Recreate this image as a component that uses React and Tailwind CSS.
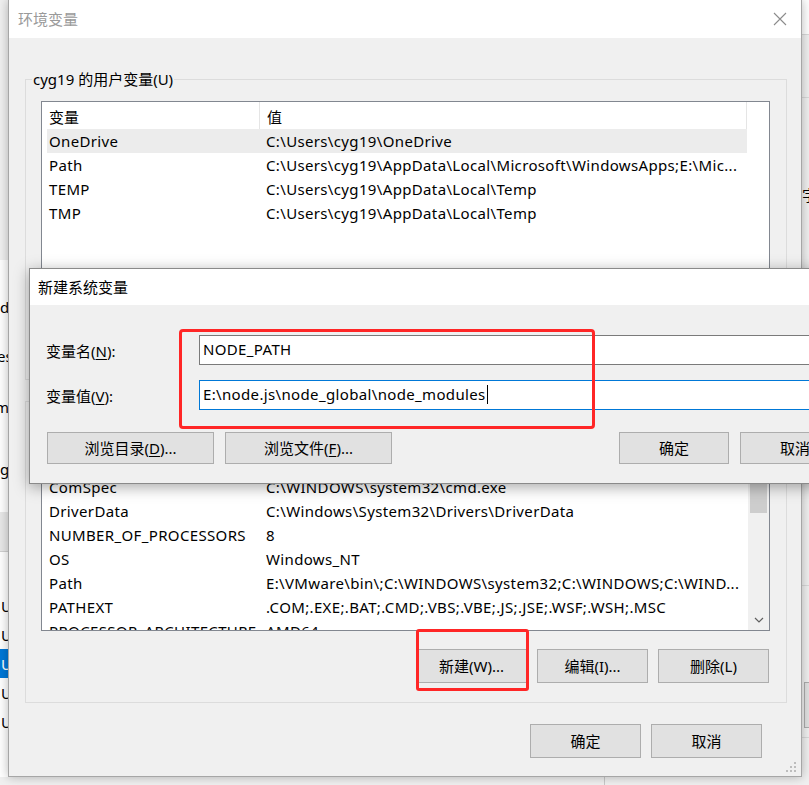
import React from 'react';

const userVars = [
  ['OneDrive', 'C:\\Users\\cyg19\\OneDrive'],
  ['Path', 'C:\\Users\\cyg19\\AppData\\Local\\Microsoft\\WindowsApps;E:\\Mic...'],
  ['TEMP', 'C:\\Users\\cyg19\\AppData\\Local\\Temp'],
  ['TMP', 'C:\\Users\\cyg19\\AppData\\Local\\Temp'],
];

const systemVars = [
  ['asl.log', 'Destination=file'],
  ['ComSpec', 'C:\\WINDOWS\\system32\\cmd.exe'],
  ['DriverData', 'C:\\Windows\\System32\\Drivers\\DriverData'],
  ['NUMBER_OF_PROCESSORS', '8'],
  ['OS', 'Windows_NT'],
  ['Path', 'E:\\VMware\\bin\\;C:\\WINDOWS\\system32;C:\\WINDOWS;C:\\WIND...'],
  ['PATHEXT', '.COM;.EXE;.BAT;.CMD;.VBS;.VBE;.JS;.JSE;.WSF;.WSH;.MSC'],
  ['PROCESSOR_ARCHITECTURE', 'AMD64'],
];

function Btn({ className = '', children }) {
  return (
    <div className={`flex shrink-0 items-center justify-center border border-[#adadad] bg-[#e1e1e1] leading-[20px] ${className}`}>
      {children}
    </div>
  );
}

function Key({ children }) {
  return <span className="underline underline-offset-2">{children}</span>;
}

function ListHeader() {
  return (
    <div className="flex h-[27px] w-[705px] shrink-0 bg-white leading-[20px]">
      <div className="flex w-[218px] items-center border-r border-[#e5e5e5] pl-[7px] pt-[2px]">变量</div>
      <div className="flex flex-1 items-center border-r border-[#e5e5e5] pl-[7px] pt-[2px]">值</div>
    </div>
  );
}

function Row({ name, value, active }) {
  return (
    <div className={`ml-[5px] flex h-[24px] w-[700px] shrink-0 items-center whitespace-nowrap leading-[20px] tracking-[0.35px] ${active ? 'bg-[#ececec]' : ''}`}>
      <div className="w-[212px] shrink-0 overflow-hidden pl-[2px]">{name}</div>
      <div className="flex-1 overflow-hidden pl-[7px]">{value}</div>
    </div>
  );
}

function Group({ label, className = '', children }) {
  return (
    <fieldset className={`ml-[16px] w-[762px] shrink-0 border border-[#dcdcdc] ${className}`}>
      <legend className="ml-[6px] px-[1px] leading-[20px]">{label}</legend>
      <div className="pl-[15px] pt-[12px]">{children}</div>
    </fieldset>
  );
}

function EnvDialog() {
  return (
    <div className="absolute left-[8px] top-0 flex h-[777px] w-[794px] flex-col border border-t-0 border-[#a6a6a6] bg-[#f0f0f0] shadow-[0_0_10px_rgba(0,0,0,0.28)]">
      <div className="flex h-[38px] shrink-0 items-center justify-between bg-white pl-[9px] pr-[14px] text-[#9a9a9a]">
        <span className="leading-[20px]">环境变量</span>
        <svg width="14" height="14" viewBox="0 0 14 14">
          <path d="M1 1L13 13M13 1L1 13" stroke="#8c8c8c" strokeWidth="1.1" fill="none" />
        </svg>
      </div>

      <Group label="cyg19 的用户变量(U)" className="mt-[31px] h-[311px]">
        <div className="flex h-[200px] w-[729px] flex-col overflow-hidden border border-[#828790] bg-white">
          <ListHeader />
          {userVars.map(([n, v], i) => (
            <Row key={n} name={n} value={v} active={i === 0} />
          ))}
        </div>
        <div className="mt-[18px] flex w-[729px] justify-end gap-[10px] pr-[1px]">
          <Btn className="h-[34px] w-[111px]">新建(N)...</Btn>
          <Btn className="h-[34px] w-[111px]">编辑(E)...</Btn>
          <Btn className="h-[34px] w-[111px]">删除(D)</Btn>
        </div>
      </Group>

      <Group label="系统变量(S)" className="mt-[11px] h-[312px]">
        <div className="flex h-[208px] w-[729px] overflow-hidden border border-[#828790] bg-white">
          <div className="flex w-[706px] flex-col overflow-hidden">
            <ListHeader />
            {systemVars.map(([n, v]) => (
              <Row key={n} name={n} value={v} />
            ))}
          </div>
          <div className="flex w-[21px] flex-col bg-[#f0f0f0]">
            <div className="h-[17px] shrink-0" />
            <div className="mx-[2px] h-[72px] shrink-0 bg-[#cdcdcd]" />
            <div className="flex-1" />
            <div className="flex h-[20px] shrink-0 items-center justify-center">
              <svg width="10" height="6" viewBox="0 0 10 6">
                <path d="M1 1L5 5L9 1" stroke="#606060" strokeWidth="1.2" fill="none" />
              </svg>
            </div>
          </div>
        </div>
        <div className="mt-[18px] flex w-[729px] justify-end gap-[10px] pr-[1px]">
          <Btn className="h-[34px] w-[111px]">新建(W)...</Btn>
          <Btn className="h-[34px] w-[111px]">编辑(I)...</Btn>
          <Btn className="h-[34px] w-[111px]">删除(L)</Btn>
        </div>
      </Group>

      <div className="mt-[21px] flex justify-end gap-[10px] pr-[39px]">
        <Btn className="h-[34px] w-[111px]">确定</Btn>
        <Btn className="h-[34px] w-[111px]">取消</Btn>
      </div>

      <svg className="absolute bottom-[3px] right-[4px]" width="11" height="11" viewBox="0 0 11 11">
        {[[8, 0], [8, 4], [4, 4], [8, 8], [4, 8], [0, 8]].map(([x, y]) => (
          <rect key={`${x}-${y}`} x={x} y={y} width="2" height="2" fill="#bdbdbd" />
        ))}
      </svg>
    </div>
  );
}

function NewVarDialog() {
  return (
    <div className="absolute left-[29px] top-[268px] flex h-[216px] w-[840px] flex-col border border-[#8a8a8a] bg-[#f0f0f0] shadow-[0_3px_14px_rgba(0,0,0,0.35)]">
      <div className="flex h-[36px] shrink-0 items-center bg-white pl-[8px] leading-[20px]">新建系统变量</div>

      <div className="mt-[30px] flex items-center">
        <div className="w-[169px] shrink-0 pl-[16px] pt-[1px] leading-[20px]">
          变量名(<Key>N</Key>):
        </div>
        <div className="flex h-[30px] w-[651px] items-center border border-[#7a7a7a] bg-white pb-[2px] pl-[3px] leading-[20px] tracking-[0.35px]">
          NODE_PATH
        </div>
      </div>

      <div className="mt-[15px] flex items-center">
        <div className="w-[169px] shrink-0 pl-[16px] pt-[2px] leading-[20px]">
          变量值(<Key>V</Key>):
        </div>
        <div className="flex h-[30px] w-[651px] items-center border border-[#0078d7] bg-white pb-[2px] pl-[3px] leading-[20px] tracking-[0.35px]">
          <span>{'E:\\node.js\\node_global\\node_modules'}</span>
          <span className="ml-[1px] h-[19px] w-[1px] bg-black" />
        </div>
      </div>

      <div className="mt-[22px] flex pl-[17px]">
        <Btn className="h-[32px] w-[167px]">
          浏览目录(<Key>D</Key>)...
        </Btn>
        <Btn className="ml-[11px] h-[32px] w-[167px]">
          浏览文件(<Key>F</Key>)...
        </Btn>
        <Btn className="ml-[227px] h-[32px] w-[110px]">确定</Btn>
        <Btn className="ml-[11px] h-[32px] w-[110px]">取消</Btn>
      </div>
    </div>
  );
}

function BackdropLeft() {
  return (
    <div className="absolute left-0 top-0 flex h-full w-[8px] flex-col overflow-hidden whitespace-nowrap bg-white leading-[20px]">
      <div className="h-[260px] shrink-0 bg-[#f0f0f0]" />
      <div className="h-[37px] shrink-0" />
      <div className="shrink-0">d</div>
      <div className="mt-[29px] ml-[-3px] shrink-0">es</div>
      <div className="mt-[31px] ml-[-5px] shrink-0">m</div>
      <div className="mt-[42px] shrink-0">gl</div>
      <div className="mt-[33px] h-[40px] shrink-0 border-b border-[#d0d0d0] bg-[#e8e8e8]" />
      <div className="mt-[39px] flex h-[29px] shrink-0 items-center pl-[1px]">U</div>
      <div className="flex h-[29px] shrink-0 items-center pl-[1px]">U</div>
      <div className="flex h-[29px] shrink-0 items-center bg-[#0078d7] pl-[1px] text-white">U</div>
      <div className="flex h-[29px] shrink-0 items-center pl-[1px]">U</div>
      <div className="flex h-[29px] shrink-0 items-center pl-[1px]">U</div>
    </div>
  );
}

function BackdropRight() {
  return (
    <div className="absolute right-0 top-0 flex h-full w-[8px] flex-col overflow-hidden whitespace-nowrap bg-[#f0f0f0] leading-[20px]">
      <div className="h-[35px] shrink-0 border-b border-[#d9d9d9] bg-white" />
      <div className="h-[63px] shrink-0 border-b border-[#d9d9d9]" />
      <div className="mt-[87px] shrink-0 pl-[1px]">字</div>
      <div className="mt-[380px] h-[1px] shrink-0 bg-[#d9d9d9]" />
      <div className="ml-[3px] mt-[96px] h-[46px] w-[20px] shrink-0 border border-[#adadad] bg-[#e1e1e1]" />
      <div className="mt-[9px] h-[1px] shrink-0 bg-[#d9d9d9]" />
    </div>
  );
}

function BackdropBottom() {
  return (
    <div className="absolute left-0 top-[777px] flex h-[8px] w-full bg-[#f0f0f0]">
      <div className="w-[604px] shrink-0" />
      <div className="w-[1px] shrink-0 bg-[#c8c8c8]" />
    </div>
  );
}

function Marks() {
  return (
    <>
      <div className="absolute left-[179px] top-[329px] h-[100px] w-[416px] rounded-[4px] border-[3px] border-[#ff2626]" />
      <div className="absolute left-[416px] top-[629px] h-[62px] w-[113px] rounded-[3px] border-[3px] border-[#ff2626]" />
    </>
  );
}

export default function App() {
  return (
    <div className="relative h-[785px] w-[809px] overflow-hidden bg-[#f0f0f0] text-[15px] text-black [font-family:'Noto_Sans','Noto_Sans_CJK_SC',sans-serif]">
      <BackdropLeft />
      <BackdropRight />
      <BackdropBottom />
      <EnvDialog />
      <NewVarDialog />
      <Marks />
    </div>
  );
}
